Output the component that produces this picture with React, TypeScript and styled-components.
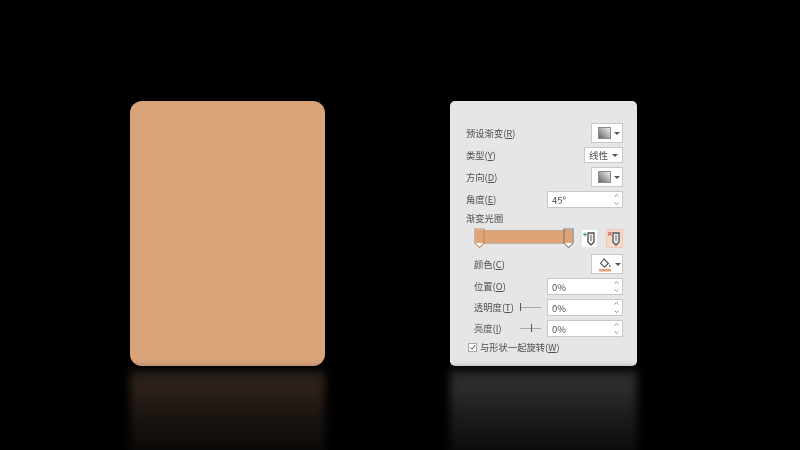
import React from "react";
import styled, { createGlobalStyle } from "styled-components";

const Global = createGlobalStyle`
  html, body { margin: 0; padding: 0; background: #000; }
  body { font-family: "Noto Sans CJK SC", "Liberation Sans", sans-serif; }
`;

const Stage = styled.div`
  width: 800px;
  height: 450px;
  overflow: hidden;
  background: #000;
  display: flex;
  gap: 125px;
  padding: 101px 0 0 130px;
  box-sizing: border-box;
`;

const Column = styled.div<{ $w: number }>`
  width: ${({ $w }) => $w}px;
  flex: none;
`;

const Card = styled.div`
  height: 265px;
  border-radius: 12px;
  background: #d9a47a;
  border-bottom: 1px solid #e2a486;
  box-sizing: border-box;
`;

const Reflection = styled.div<{ $from: string; $peak: string; $mid: string; $to: string }>`
  height: 88px;
  margin-top: 4px;
  background: linear-gradient(
    ${({ $from }) => $from},
    ${({ $peak }) => $peak} 16%,
    ${({ $mid }) => $mid} 55%,
    ${({ $to }) => $to}
  );
  filter: blur(4px);
`;

const Panel = styled.div`
  height: 265px;
  box-sizing: border-box;
  padding: 22px 14px 0 16px;
  border-radius: 5px;
  background: #e6e6e6;
  display: flex;
  flex-direction: column;
  gap: 4px;
  color: #4f4f4f;
  font-size: 9.3px;
  filter: blur(0.3px);
`;

const Row = styled.div<{ $h: number; $top?: number; $indent?: number }>`
  height: ${({ $h }) => $h}px;
  margin-top: ${({ $top }) => $top ?? 0}px;
  padding-left: ${({ $indent }) => $indent ?? 0}px;
  display: flex;
  align-items: center;
  flex: none;
`;

const Label = styled.span`
  line-height: 10px;
  padding-bottom: 1px;
  white-space: nowrap;
  margin-right: auto;
`;

const Box = styled.div`
  background: #fff;
  border: 1px solid #c8c8c8;
  box-sizing: border-box;
  height: 100%;
  display: flex;
  align-items: center;
`;

const DropButton = styled(Box)`
  width: 32px;
  padding-left: 6px;
  gap: 3px;
`;

const Select = styled(Box)`
  width: 39px;
  padding-left: 4px;
  justify-content: space-between;
  padding-right: 4px;
  font-size: 9.5px;
`;

const Spin = styled(Box)`
  width: 76px;
  padding: 0 3px 0 4px;
  justify-content: space-between;
  font-size: 9.5px;
`;

const SpinArrows = styled.span`
  display: flex;
  flex-direction: column;
  justify-content: center;
  gap: 5px;
`;

const Caret = styled.i`
  width: 0;
  height: 0;
  border-left: 3px solid transparent;
  border-right: 3px solid transparent;
  border-top: 3px solid #555;
`;

const Swatch = styled.i`
  width: 13px;
  height: 12px;
  box-sizing: border-box;
  border: 1px solid #8a8a8a;
  background: linear-gradient(45deg, #666, #f0f0f0);
`;

const Track = styled.div`
  position: relative;
  align-self: flex-start;
  width: 96px;
  height: 14px;
  margin-top: 1px;
  margin-left: 10px;
  margin-right: auto;
  background: #dfa375;
  border-top: 1px solid #c7a68c;
  border-bottom: 1px solid #b9b4ae;
  box-sizing: border-box;
`;

const Stop = styled.svg<{ $side: "left" | "right" }>`
  position: absolute;
  top: -3px;
  ${({ $side }) => ($side === "left" ? "left: -2px;" : "right: -2px;")}
`;

const ToolButton = styled.div<{ $danger?: boolean }>`
  width: 17px;
  height: 19px;
  margin-left: 8px;
  display: flex;
  align-items: center;
  justify-content: center;
  background: ${({ $danger }) => ($danger ? "#f8d9c8" : "#fff")};
  border: 1px solid ${({ $danger }) => ($danger ? "#f0c8b2" : "#e6e6e6")};
  box-sizing: border-box;
`;

const MiniSlider = styled.div<{ $pos: number }>`
  position: relative;
  width: 21px;
  height: 1px;
  margin-right: 6px;
  background: #aaa;

  &::after {
    content: "";
    position: absolute;
    left: ${({ $pos }) => $pos}px;
    top: -4px;
    width: 1px;
    height: 8px;
    background: #555;
  }
`;

const Check = styled.span`
  width: 9px;
  height: 9px;
  margin-left: 2px;
  margin-right: 3px;
  background: #fff;
  border: 1px solid #aaa;
  box-sizing: border-box;
  display: flex;
  align-items: center;
  justify-content: center;
`;

const Arrows = () => (
  <SpinArrows>
    <svg width="5" height="3" viewBox="0 0 5 3"><path d="M.5 2.5 2.5.5l2 2" fill="none" stroke="#777" strokeWidth=".8" /></svg>
    <svg width="5" height="3" viewBox="0 0 5 3"><path d="M.5.5l2 2 2-2" fill="none" stroke="#777" strokeWidth=".8" /></svg>
  </SpinArrows>
);

const StopIcon = ({ side, active }: { side: "left" | "right"; active?: boolean }) => (
  <Stop $side={side} width="11" height="21" viewBox="0 0 11 21">
    <path d="M1 1h9v14l-4.500 4.500L1 15z" fill="none" stroke={active ? "#c58a5e" : "#85786c"} strokeWidth="1.2" />
    <path d="M1.600 15h7.800l-3.900 3.800z" fill="#fff" />
  </Stop>
);

const PinIcon = ({ add }: { add?: boolean }) => (
  <svg width="15" height="15" viewBox="0 0 15 15">
    <path d="M6 2h6v9l-3 3-3-3z" fill="#eee" stroke="#4f4f4f" strokeWidth="1.300" />
    <path d="M8 4h2v6H8z" fill="#a8a8a8" />
    {add ? (
      <path d="M1 3.500h4M3 1.500v4" stroke="#3f9f7f" strokeWidth="1.100" />
    ) : (
      <path d="M1 1l3.500 3.500M4.500 1 1 4.500" stroke="#d9665a" strokeWidth="1.100" />
    )}
  </svg>
);

const FillIcon = () => (
  <svg width="14" height="15" viewBox="0 0 14 15">
    <path d="M6 2l4.500 4.500L6.500 10 2.500 6.500z" fill="#fff" stroke="#555" strokeWidth="1.100" />
    <path d="M11.500 7.500c1 1.300 1.300 2 .8 2.600-.6.500-1.300 0-1.200-.8z" fill="#555" />
    <path d="M1 12h12v2.500H1z" fill="#dfa375" />
  </svg>
);

const App = () => (
  <Stage>
    <Global />
    <Column $w={195}>
      <Card />
      <Reflection $from="#1f1813" $peak="#2e231b" $mid="#1a1410" $to="#080706" />
    </Column>
    <Column $w={187}>
      <Panel>
        <Row $h={20}>
          <Label>预设渐变(<u>R</u>)</Label>
          <DropButton><Swatch /><Caret /></DropButton>
        </Row>
        <Row $h={16}>
          <Label>类型(<u>Y</u>)</Label>
          <Select>线性<Caret /></Select>
        </Row>
        <Row $h={20}>
          <Label>方向(<u>D</u>)</Label>
          <DropButton><Swatch /><Caret /></DropButton>
        </Row>
        <Row $h={17}>
          <Label>角度(<u>E</u>)</Label>
          <Spin>45°<Arrows /></Spin>
        </Row>
        <Row $h={10} $top={1}>
          <Label>渐变光圈</Label>
        </Row>
        <Row $h={19} $top={2}>
          <Track>
            <StopIcon side="left" active />
            <StopIcon side="right" />
          </Track>
          <ToolButton><PinIcon add /></ToolButton>
          <ToolButton $danger><PinIcon /></ToolButton>
        </Row>
        <Row $h={20} $top={2} $indent={8}>
          <Label>颜色(<u>C</u>)</Label>
          <DropButton><FillIcon /><Caret /></DropButton>
        </Row>
        <Row $h={17} $indent={8}>
          <Label>位置(<u>O</u>)</Label>
          <Spin>0%<Arrows /></Spin>
        </Row>
        <Row $h={17} $indent={8}>
          <Label>透明度(<u>T</u>)</Label>
          <MiniSlider $pos={0} />
          <Spin>0%<Arrows /></Spin>
        </Row>
        <Row $h={17} $indent={8}>
          <Label>亮度(<u>I</u>)</Label>
          <MiniSlider $pos={11} />
          <Spin>0%<Arrows /></Spin>
        </Row>
        <Row $h={10} $top={1}>
          <Check>
            <svg width="7" height="7" viewBox="0 0 7 7"><path d="M1 3.500 3 5.500 6 1" fill="none" stroke="#555" strokeWidth="1" /></svg>
          </Check>
          <Label>与形状一起旋转(<u>W</u>)</Label>
        </Row>
      </Panel>
      <Reflection $from="#242424" $peak="#2e2e2e" $mid="#1b1b1b" $to="#090909" />
    </Column>
  </Stage>
);

export default App;
